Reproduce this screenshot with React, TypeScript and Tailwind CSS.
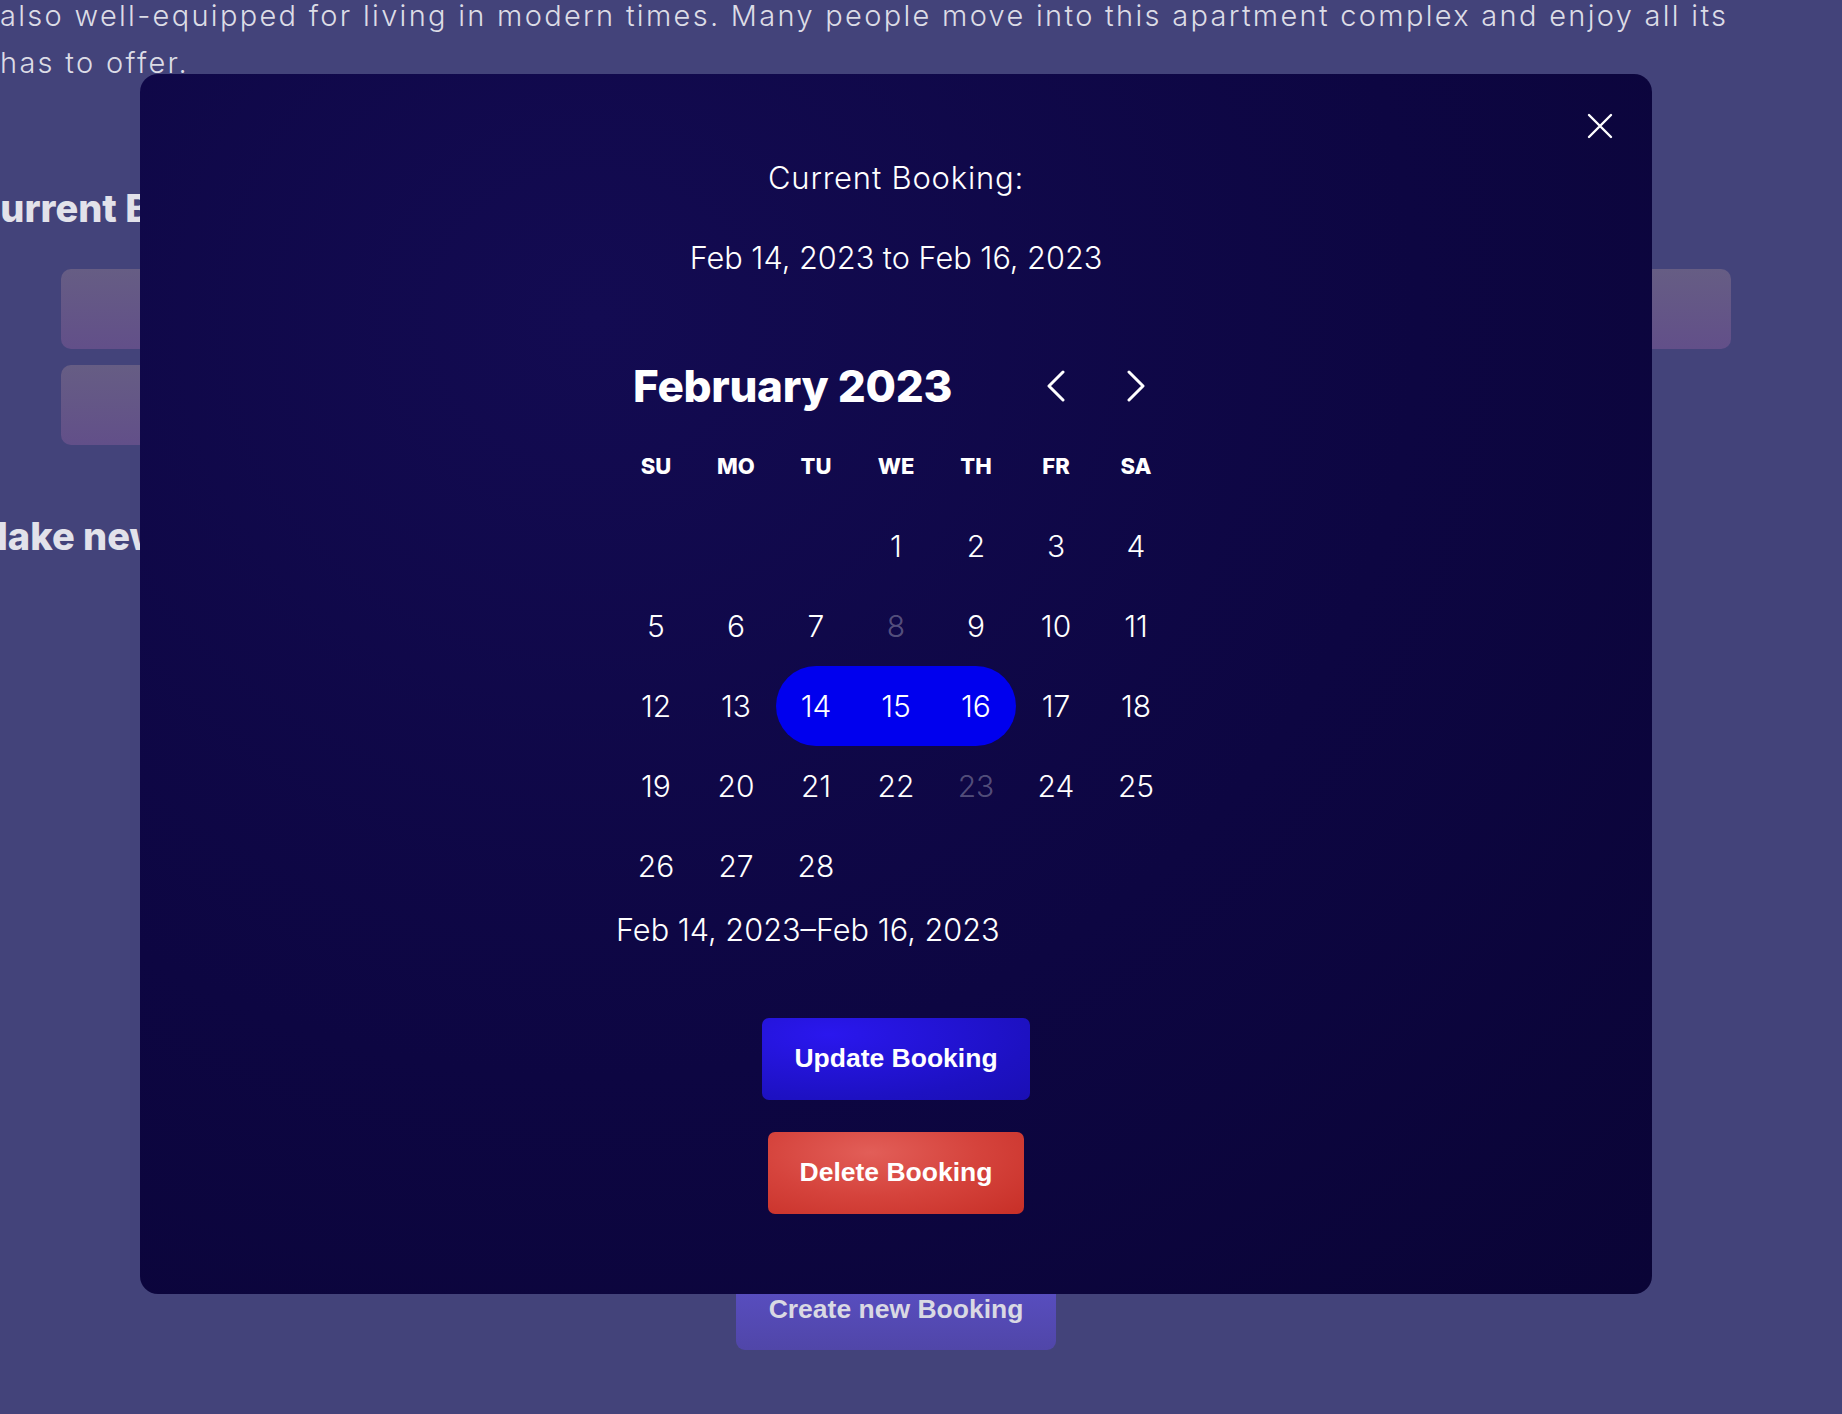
import { useState } from "react";

const WEEKDAYS = ["SU", "MO", "TU", "WE", "TH", "FR", "SA"];
const DISABLED = [8, 23];
const RANGE = [14, 16];

function CloseIcon() {
  return (
    <svg width="26" height="26" viewBox="0 0 26 26" fill="none" stroke="white" strokeWidth="2.4" strokeLinecap="round">
      <path d="M2 2L24 24M24 2L2 24" />
    </svg>
  );
}

function Chevron({ dir }: { dir: "left" | "right" }) {
  return (
    <svg width="20" height="32" viewBox="0 0 20 32" fill="none" stroke="white" strokeWidth="3" strokeLinecap="round" strokeLinejoin="round">
      {dir === "left" ? <path d="M17 2L3 16L17 30" /> : <path d="M3 2L17 16L3 30" />}
    </svg>
  );
}

function Calendar() {
  const cells: (number | null)[] = [null, null, null];
  for (let d = 1; d <= 28; d++) cells.push(d);

  return (
    <div className="w-[560px] flex flex-col">
      <div className="flex items-center h-[80px]">
        <div className="flex-1 pl-[17px] text-[44px] font-extrabold tracking-[-0.3px] text-white">February 2023</div>
        <button className="w-[80px] h-[80px] flex items-center justify-center">
          <Chevron dir="left" />
        </button>
        <button className="w-[80px] h-[80px] flex items-center justify-center">
          <Chevron dir="right" />
        </button>
      </div>
      <div className="grid grid-cols-7">
        {WEEKDAYS.map((w) => (
          <div key={w} className="h-[80px] flex items-center justify-center text-[22px] font-extrabold text-white">
            {w}
          </div>
        ))}
        {cells.map((d, i) => {
          if (d === null) return <div key={"e" + i} className="h-[80px]" />;
          const inRange = d >= RANGE[0] && d <= RANGE[1];
          const isStart = d === RANGE[0];
          const isEnd = d === RANGE[1];
          const disabled = DISABLED.includes(d);
          return (
            <div
              key={d}
              className={
                "h-[80px] flex items-center justify-center text-[30px] font-light " +
                (inRange ? "bg-[#0000ee] text-white " : "") +
                (isStart ? "rounded-l-full " : "") +
                (isEnd ? "rounded-r-full " : "") +
                (disabled ? "text-white/30" : "text-white")
              }
            >
              {d}
            </div>
          );
        })}
      </div>
      <div className="mt-[2px] h-[44px] flex items-center text-[30.7px] font-light text-white">
        Feb 14, 2023–Feb 16, 2023
      </div>
    </div>
  );
}

function BookingModal() {
  return (
    <div className="absolute left-[140px] top-[74px] w-[1512px] h-[1220px] rounded-[18px] bg-[radial-gradient(ellipse_at_30%_20%,#130b52_0%,#0d0642_55%,#0a0436_100%)] flex flex-col items-center pt-[82px]">
      <button className="absolute right-[39px] top-[39px]">
        <CloseIcon />
      </button>
      <div className="h-[44px] flex items-center text-[31px] tracking-[0.8px] font-light text-white">Current Booking:</div>
      <div className="mt-[36px] h-[44px] flex items-center text-[30.7px] font-light text-white">
        Feb 14, 2023 to Feb 16, 2023
      </div>
      <div className="mt-[66px]">
        <Calendar />
      </div>
      <button className="mt-[66px] h-[82px] px-[32px] rounded-[7px] bg-[radial-gradient(ellipse_at_25%_20%,#2a17ee_0%,#1d11c2_70%,#1a0fb4_100%)] text-white text-[26.5px] font-bold font-['Liberation_Sans',Arial,sans-serif]">
        Update Booking
      </button>
      <button className="mt-[32px] h-[82px] px-[32px] rounded-[7px] bg-[radial-gradient(ellipse_at_40%_25%,#e25e58_0%,#d5433c_50%,#c72f27_100%)] text-white text-[26.5px] font-bold font-['Liberation_Sans',Arial,sans-serif]">
        Delete Booking
      </button>
    </div>
  );
}

export default function App() {
  const [open] = useState(true);
  return (
    <div className="relative w-full h-[1414px] overflow-hidden bg-[#43437a] font-['Inter',sans-serif]">
      <div className="-ml-[28px] w-[1848px] flex flex-col">
        <div className="-mt-[8px] pl-[28px] text-[29px] tracking-[2.3px] leading-[47px] font-light text-[#dcdce6]">
          <div className="whitespace-nowrap">
            also well-equipped for living in modern times. Many people move into this apartment complex and enjoy all its
          </div>
          <div className="whitespace-nowrap">has to offer.</div>
        </div>

        <h2 className="mt-[98px] text-[38px] leading-[48px] font-extrabold text-[#e2e2ea]">Current Bookings</h2>
        <div className="mt-[37px] mx-[89px] flex flex-col gap-[16px]">
          <div className="h-[80px] rounded-[10px] bg-linear-to-b from-[#665d84] to-[#624f89]" />
          <div className="h-[80px] w-[1400px] rounded-[10px] bg-linear-to-b from-[#665d84] to-[#624f89]" />
        </div>

        <h2 className="mt-[67px] text-[38px] leading-[48px] font-extrabold text-[#e2e2ea]">Make new Booking</h2>
        <div className="h-[710px]" />

        <button className="mx-auto w-[320px] h-[80px] rounded-[9px] bg-linear-to-b from-[#5b50c8] to-[#5046a8] text-[#d9d9e3] text-[26.5px] font-bold font-['Liberation_Sans',Arial,sans-serif]">
          Create new Booking
        </button>
      </div>

      {open && <BookingModal />}
    </div>
  );
}
